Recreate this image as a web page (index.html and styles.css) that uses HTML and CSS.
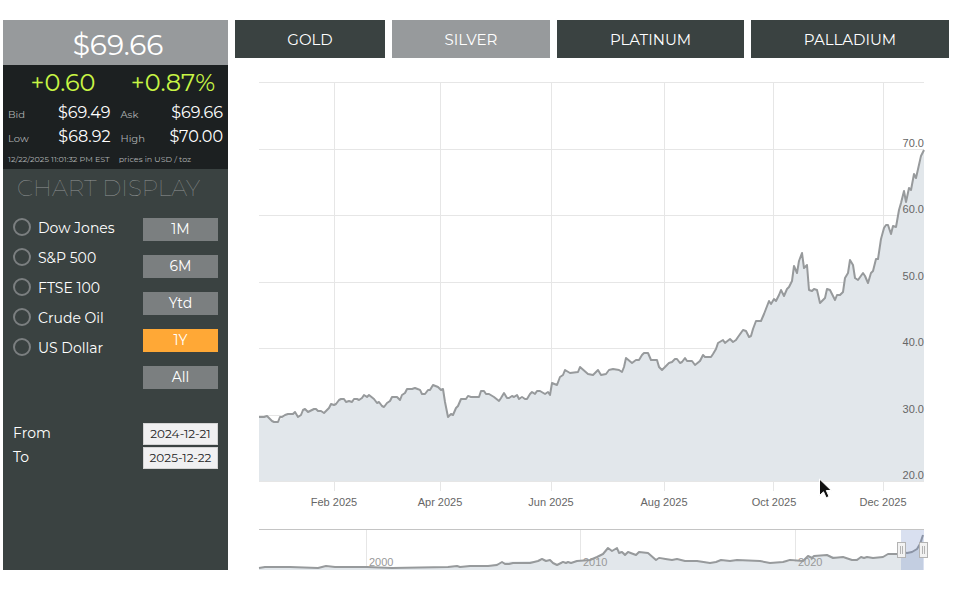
FILE: index.html
```
<!DOCTYPE html>
<html lang="en">
    <head>
        <meta charset="utf-8">
        <title>Silver Price Chart</title>
        <link rel="stylesheet" href="styles.css">
    </head>
    <body>
        <div id="container">
            <aside id="sidebar">
                <div class="price">$69.66</div>
                <div class="quote">
                    <div class="change">
                        <span>+0.60</span>
                        <span>+0.87%</span>
                    </div>
                    <dl class="spread">
                        <div><dt>Bid</dt><dd>$69.49</dd></div>
                        <div><dt>Ask</dt><dd>$69.66</dd></div>
                        <div><dt>Low</dt><dd>$68.92</dd></div>
                        <div><dt>High</dt><dd>$70.00</dd></div>
                    </dl>
                    <div class="stamp">
                        <span>12/22/2025 11:01:32 PM EST</span>
                        <span>prices in USD / toz</span>
                    </div>
                </div>
                <h2>CHART DISPLAY</h2>
                <div class="options">
                    <div class="compare">
                        <label><input type="radio" name="compare">Dow Jones</label>
                        <label><input type="radio" name="compare">S&amp;P 500</label>
                        <label><input type="radio" name="compare">FTSE 100</label>
                        <label><input type="radio" name="compare">Crude Oil</label>
                        <label><input type="radio" name="compare">US Dollar</label>
                    </div>
                    <div class="ranges">
                        <button>1M</button>
                        <button>6M</button>
                        <button>Ytd</button>
                        <button class="active">1Y</button>
                        <button>All</button>
                    </div>
                </div>
                <div class="dates">
                    <label for="from">From</label>
                    <input type="text" id="from" value="2024-12-21">
                    <label for="to">To</label>
                    <input type="text" id="to" value="2025-12-22">
                </div>
            </aside>
            <main>
                <nav class="tabs">
                    <a href="#gold">GOLD</a>
                    <a href="#silver" class="active">SILVER</a>
                    <a href="#platinum">PLATINUM</a>
                    <a href="#palladium">PALLADIUM</a>
                </nav>
                <svg class="chart" viewBox="235 58 714 512" role="img" aria-label="Silver price, last year">
                    <path class="grid" d="M259 82.500H924M259 149.500H924M259 215.500H924M259 282.500H924M259 348.500H924M259 415.500H924M259 481.500H924M334.500 82V491M440.500 82V491M551.500 82V491M664.500 82V491M773.500 82V491M883.500 82V491"/>
                    <defs>
                        <path id="price" d="M259 417L264 417 267 416 272 421 274 422 278 422 280 417 282 417 285 415 288 414 293 414 295 412 298 417 301 415 303 410 305 409 308 412 310 411 314 409 316 409 318 411 321 411 324 413 326 411 329 408 331 404 334 405 336 404 339 400 341 399 344 399 346 402 349 401 352 402 354 399 357 399 359 400 362 398 364 395 367 397 369 395 374 399 377 403 379 402 382 406 384 407 387 403 390 401 392 397 397 397 400 400 402 395 405 393 407 389 412 389 415 388 420 390 422 394 425 394 428 390 430 390 433 385 438 387 441 390 443 389 445 402 448 417 451 414 453 415 456 408 458 406 461 399 466 399 468 396 471 397 479 397 481 391 484 391 486 394 489 394 494 397 499 401 501 398 504 393 507 398 509 398 512 396 514 397 517 395 519 399 522 397 525 399 527 399 530 394 532 392 535 394 537 391 540 391 545 394 548 392 550 395 552 383 557 385 560 377 563 375 565 370 570 373 578 372 580 367 588 374 593 375 598 370 601 375 606 374 609 370 613 369 619 370 622 372 624 367 626 358 632 363 636 360 639 360 642 355 644 353 648 353 651 360 657 360 659 367 662 370 669 363 672 362 675 359 677 359 680 363 682 362 685 358 687 361 692 361 695 365 700 361 703 355 705 357 711 357 713 354 716 349 718 343 723 340 725 343 730 339 733 342 736 340 738 337 743 330 746 331 749 337 751 336 753 329 756 321 761 321 764 314 769 301 771 304 774 299 776 301 779 295 781 290 784 296 787 289 789 287 792 281 794 266 797 273 799 261 802 253 804 268 807 265 809 290 812 291 814 289 817 290 820 303 825 298 827 289 830 290 835 300 837 295 840 295 843 292 845 278 848 273 850 260 853 265 855 278 858 280 863 273 865 276 868 283 871 273 873 271 876 259 878 259 881 239 884 228 886 225 888 225 891 234 893 226 896 227 899 210 901 203 904 191 906 202 909 188 911 190 914 174 916 178 921 156 924 150"/>
                        <path id="history" d="M259 568L265 567 290 567 318 568 326 566 335 567 367 567 392 568 448 567 457 566 460 567 470 566 488 566 497 565 502 562 505 564 509 564 513 563 522 563 530 563 538 561 542 559 546 561 550 560 553 563 557 565 563 562 566 563 568 562 571 563 577 561 590 560 597 557 603 554 608 548 612 551 617 548 619 553 622 552 625 555 628 552 636 555 639 552 648 553 656 560 659 558 672 560 677 559 685 561 697 561 710 563 716 562 721 560 730 561 737 560 760 561 770 563 783 562 790 560 803 561 808 556 812 558 814 556 827 555 833 558 843 557 852 560 857 560 861 557 864 558 867 557 873 558 883 557 888 554 897 554 902 552 907 553 912 552 917 549 920 544 923 535"/>
                    </defs>
                    <path class="area" d="M259 417L267 416 274 422 278 422 285 415 295 412 298 417 305 409 308 412 314 409 324 413 331 404 334 405 341 399 344 399 346 402 359 400 364 395 369 395 384 407 392 397 397 397 400 400 407 389 415 388 422 394 425 394 433 385 438 387 443 389 448 417 453 415 461 399 466 399 479 397 481 391 489 394 499 401 504 393 507 398 517 395 519 399 527 399 532 392 540 391 550 395 552 383 557 385 565 370 570 373 578 372 580 367 588 374 593 375 598 370 601 375 606 374 613 369 622 372 626 358 632 363 639 360 644 353 648 353 651 360 657 360 662 370 677 359 680 363 685 358 687 361 692 361 695 365 703 355 705 357 711 357 718 343 723 340 725 343 730 339 733 342 743 330 746 331 749 337 751 336 756 321 761 321 769 301 771 304 774 299 776 301 781 290 784 296 792 281 794 266 797 273 802 253 804 268 807 265 809 290 817 290 820 303 825 298 827 289 830 290 835 300 837 295 843 292 845 278 848 273 850 260 853 265 855 278 858 280 863 273 868 283 873 271 876 259 878 259 884 228 888 225 891 234 893 226 896 227 899 210 904 191 906 202 909 188 911 190 914 174 916 178 924 150V481H259Z"/>
                    <use href="#price" class="line"/>
                    <g class="axis" text-anchor="end">
                        <text x="924" y="147">70.0</text>
                        <text x="924" y="213">60.0</text>
                        <text x="924" y="280">50.0</text>
                        <text x="924" y="346">40.0</text>
                        <text x="924" y="413">30.0</text>
                        <text x="924" y="479">20.0</text>
                    </g>
                    <g class="axis" text-anchor="middle">
                        <text x="334" y="506">Feb 2025</text>
                        <text x="440" y="506">Apr 2025</text>
                        <text x="551" y="506">Jun 2025</text>
                        <text x="664" y="506">Aug 2025</text>
                        <text x="774" y="506">Oct 2025</text>
                        <text x="883" y="506">Dec 2025</text>
                    </g>

                    <!-- navigator -->
                    <path class="grid" d="M366.500 530V570M580.500 530V570M795.500 530V570"/>
                    <path class="area" d="M259 568L367 567 392 568 488 566 502 562 538 561 550 560 557 565 577 561 590 560 603 554 608 548 612 551 617 548 622 552 636 555 639 552 648 553 656 560 672 560 697 561 710 563 721 560 760 561 770 563 803 561 808 556 827 555 852 560 861 557 883 557 888 554 912 552 917 549 920 544 923 535V570H259Z"/>
                    <use href="#history" class="line"/>
                    <g class="years">
                        <text x="369" y="566">2000</text>
                        <text x="583" y="566">2010</text>
                        <text x="798" y="566">2020</text>
                    </g>
                    <rect class="mask" x="901" y="530" width="23" height="40"/>
                    <path class="outline" d="M259 529.500H924"/>
                    <g class="handle">
                        <rect x="897.500" y="542.500" width="8" height="15"/>
                        <path d="M900.500 546V554M902.500 546V554"/>
                        <rect x="919.500" y="542.500" width="8" height="15"/>
                        <path d="M922.500 546V554M924.500 546V554"/>
                    </g>
                    <path class="pointer" d="M819.500 479V495.500L823.500 491.800 826.200 497.800 829 496.500 826.300 490.500H831.300Z"/>
                </svg>
            </main>
        </div>
    </body>
</html>
```
FILE: styles.css
```
* {
    box-sizing: border-box;
}
body {
    margin: 0;
    background: #fff;
    font-family: Montserrat, "Open Sans", sans-serif;
    font-size: 14px;
    color: #fff;
}
button, input {
    font-family: inherit;
    color: inherit;
}
#container {
    display: flex;
    gap: 7px;
    padding: 20px 10px 20px 3px;
}
#sidebar {
    flex: 0 0 225px;
    background: #3a4241;
}
main {
    flex: 1;
    min-width: 0;
}

/* quote box */
.price {
    height: 45px;
    padding: 4px 0 0 5px;
    background: #979a9c;
    font-size: 28px;
    line-height: 42px;
    text-align: center;
}
.quote {
    background: #1c2021;
    height: 104px;
    padding: 0 5px;
}
.change {
    display: grid;
    grid-template-columns: 1fr 1fr;
    margin-right: -5px;
    color: #c8f545;
    font-size: 24px;
    line-height: 36px;
    text-align: center;
}
.spread {
    display: grid;
    grid-template-columns: 1fr 1fr;
    column-gap: 10px;
    margin: 0;
    line-height: 24px;
}
.spread div {
    display: flex;
    justify-content: space-between;
    align-items: baseline;
    height: 24px;
}
dt {
    font-size: 10px;
    color: #b0b3b4;
}
dd {
    margin: 0;
    font-size: 16px;
}
.stamp {
    display: flex;
    gap: 9px;
    font-size: 8px;
    line-height: 20px;
    color: #b0b3b4;
    white-space: nowrap;
}

/* chart options */
h2 {
    margin: 0;
    padding-left: 14px;
    font-size: 23px;
    line-height: 38px;
    font-weight: 100;
    color: #939797;
    white-space: nowrap;
}
.options {
    display: flex;
    justify-content: space-between;
    padding: 6px 10px 0;
}
.compare label {
    display: flex;
    align-items: center;
    gap: 7px;
    height: 30px;
}
.compare input {
    appearance: none;
    width: 18px;
    height: 18px;
    margin: 0 0 2px;
    border: 2px solid #7b7f80;
    border-radius: 50%;
}
.ranges {
    display: flex;
    flex-direction: column;
    gap: 14px;
    width: 75px;
    padding-top: 5px;
}
.ranges button {
    height: 23px;
    padding: 0 0 2px;
    border: 0;
    background: #7b7f80;
    font-size: 14px;
    line-height: 20px;
}
.ranges .active {
    background: #ffa836;
}
.dates {
    display: grid;
    grid-template-columns: 1fr 75px;
    gap: 2px;
    padding: 34px 10px 0;
    line-height: 20px;
}
.dates input {
    width: 75px;
    height: 22px;
    padding: 0 0 2px;
    border: 1px solid #d4d4d4;
    background: #f0f0f1;
    color: #222;
    font-size: 12px;
    text-align: center;
}

/* metal tabs */
.tabs {
    display: grid;
    grid-template-columns: 150fr 158fr 187fr 198fr;
    gap: 7px;
}
.tabs a {
    padding-top: 2px;
    background: #3a4241;
    color: #fff;
    font-size: 15px;
    line-height: 36px;
    text-align: center;
    text-decoration: none;
}
.tabs .active {
    background: #979a9c;
}

/* chart */
.chart {
    display: block;
    width: 100%;
    font-family: "Liberation Sans", Arial, sans-serif;
    font-size: 11px;
}
.grid {
    fill: none;
    stroke: #e6e6e6;
}
.area {
    fill: #e2e7eb;
}
.line {
    fill: none;
    stroke: #979a9c;
    stroke-width: 2;
    stroke-linejoin: round;
}
.axis {
    fill: #666;
}
.years {
    fill: #999;
}
.mask {
    fill: #6685c2;
    fill-opacity: .25;
}
.outline {
    stroke: #c4c4c4;
}
.handle {
    fill: #f2f2f2;
    stroke: #b3b3b3;
}
.pointer {
    fill: #111;
    stroke: #fff;
}
```
